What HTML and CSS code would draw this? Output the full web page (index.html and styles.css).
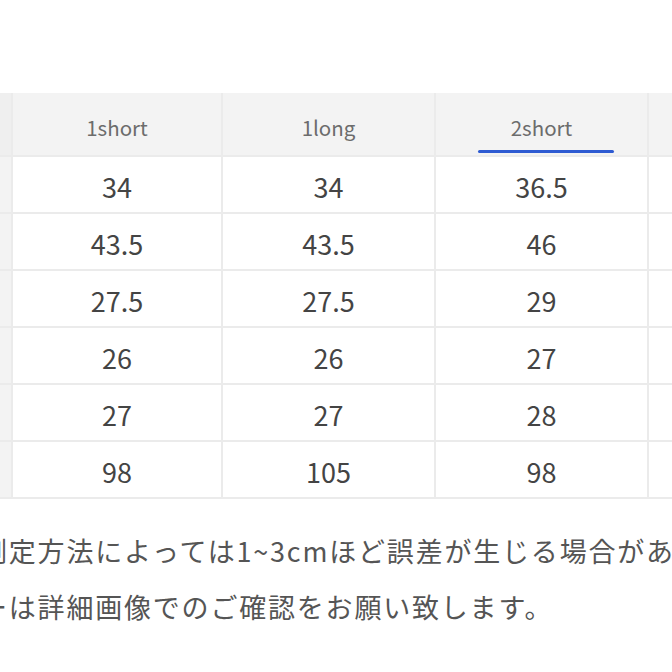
FILE: index.html
```html
<!DOCTYPE html>
<html lang="ja">
<head>
<meta charset="utf-8">
<link rel="stylesheet" href="styles.css">
</head>
<body>
<div class="page">
  <div class="table">
    <div class="hcell label"></div>
    <div class="hcell">1short</div>
    <div class="hcell">1long</div>
    <div class="hcell active">2short</div>
    <div class="hcell"></div>

    <div class="cell label"><span class="cut">)</span></div>
    <div class="cell">34</div><div class="cell">34</div><div class="cell">36.5</div><div class="cell"></div>

    <div class="cell label"></div>
    <div class="cell">43.5</div><div class="cell">43.5</div><div class="cell">46</div><div class="cell"></div>

    <div class="cell label"></div>
    <div class="cell">27.5</div><div class="cell">27.5</div><div class="cell">29</div><div class="cell"></div>

    <div class="cell label"></div>
    <div class="cell">26</div><div class="cell">26</div><div class="cell">27</div><div class="cell"></div>

    <div class="cell label"></div>
    <div class="cell">27</div><div class="cell">27</div><div class="cell">28</div><div class="cell"></div>

    <div class="cell label"></div>
    <div class="cell">98</div><div class="cell">105</div><div class="cell">98</div><div class="cell"></div>
  </div>
  <div class="notes">
    <p>測定方法によっては1~3cmほど誤差が生じる場合があります。</p>
    <p>ーは詳細画像でのご確認をお願い致します。</p>
  </div>
</div>
</body>
</html>
```

FILE: styles.css
```css
html, body {
  margin: 0;
  padding: 0;
  background: #ffffff;
  overflow: hidden;
}
body {
  width: 672px;
  height: 672px;
  font-family: "Noto Sans CJK JP", "Noto Sans", sans-serif;
}
.page {
  padding-top: 93px;
}
.table {
  display: grid;
  grid-template-columns: 11px 208px 211px 211px 1fr;
  grid-template-rows: 62px repeat(6, 55px);
  gap: 2px;
  padding-bottom: 2px;
  background: #ebebeb;
}
.hcell {
  position: relative;
  background: #f3f3f3;
  color: #6c6c6c;
  font-size: 20.5px;
  display: flex;
  align-items: center;
  justify-content: center;
  padding-top: 5px;
  box-sizing: border-box;
}
.hcell.label {
  background: #efefef;
}
.hcell.active::after {
  content: "";
  position: absolute;
  left: 42px;
  top: 57px;
  width: 136px;
  height: 3px;
  border-radius: 2px;
  background: #2e5bd2;
}
.cell {
  background: #ffffff;
  color: #444444;
  font-size: 27px;
  display: flex;
  align-items: center;
  justify-content: center;
  padding-top: 3px;
  box-sizing: border-box;
}
.cell.label {
  background: #f3f3f3;
  justify-content: flex-start;
  overflow: hidden;
}
.cut {
  margin-left: -7px;
  color: #b5b5b5;
  font-size: 20px;
}
.notes {
  margin-left: -20px;
  padding-top: 24px;
  color: #555555;
  font-size: 27px;
  letter-spacing: 1.8px;
  white-space: nowrap;
}
.notes p {
  margin: 0;
  line-height: 56px;
}
```
